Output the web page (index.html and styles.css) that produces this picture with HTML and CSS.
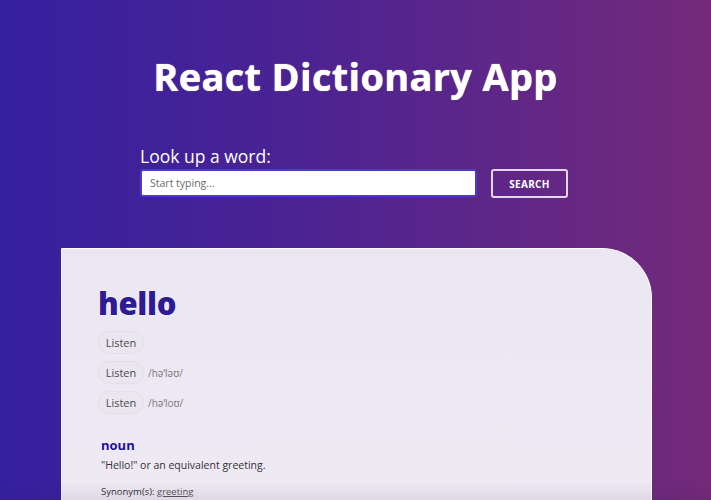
FILE: index.html
```html
<!DOCTYPE html>
<html lang="en">
<head>
<meta charset="utf-8">
<title>React Dictionary App</title>
<link rel="stylesheet" href="styles.css">
</head>
<body>
<div class="app">
  <h1 class="title">React Dictionary App</h1>
  <form class="search">
    <label class="search-label" for="q">Look up a word:</label>
    <div class="search-row">
      <input id="q" class="search-input" type="text" placeholder="Start typing...">
      <button class="search-btn" type="button">SEARCH</button>
    </div>
  </form>
  <section class="card">
    <h2 class="word">hello</h2>
    <div class="phonetics">
      <div class="phonetic"><button class="listen" type="button">Listen</button></div>
      <div class="phonetic"><button class="listen" type="button">Listen</button><span class="ipa">/həˈləʊ/</span></div>
      <div class="phonetic"><button class="listen" type="button">Listen</button><span class="ipa">/həˈloʊ/</span></div>
    </div>
    <div class="meaning">
      <h3 class="pos">noun</h3>
      <p class="definition">"Hello!" or an equivalent greeting.</p>
      <p class="synonyms">Synonym(s): <a class="syn" href="#">greeting</a></p>
    </div>
  </section>
</div>
<div class="bottom-fade"></div>
</body>
</html>
```
FILE: styles.css
```css
html, body {
  margin: 0;
  padding: 0;
}
body {
  min-height: 500px;
  background: linear-gradient(90deg, #3520a0 0%, #4a2393 40%, #622786 75%, #742a79 100%);
  font-family: "Open Sans", "Noto Sans", sans-serif;
  overflow: hidden;
}
.app {
  display: flex;
  flex-direction: column;
  align-items: center;
}
.title {
  margin: 50px 0 0;
  color: #fff;
  font-size: 38px;
  font-weight: 700;
  line-height: 52px;
  letter-spacing: 0.3px;
  text-shadow: 0 0 1px #fff, 1px 1px 0 rgba(60, 20, 120, 0.5);
}
.search {
  margin-top: 42px;
  width: 428px;
  margin-left: -3px;
  display: flex;
  flex-direction: column;
}
.search-label {
  color: #fff;
  font-size: 17.5px;
  line-height: 24px;
  margin-bottom: 1px;
}
.search-row {
  display: flex;
  gap: 14px;
}
.search-input {
  width: 337px;
  height: 28px;
  box-sizing: border-box;
  border: 2px solid #4a3cc6;
  border-radius: 3px;
  padding: 0 8px;
  font-family: inherit;
  font-size: 10.5px;
  color: #333;
  background: #fff;
  outline: none;
}
.search-input::placeholder {
  color: #6c6c6c;
}
.search-btn {
  width: 77px;
  height: 29px;
  box-sizing: border-box;
  border: 2px solid #e4d6ee;
  border-radius: 3px;
  background: transparent;
  color: #fff;
  font-family: inherit;
  font-size: 10px;
  font-weight: 700;
  letter-spacing: 0.3px;
  padding: 0;
}
.card {
  align-self: flex-start;
  margin: 50px 0 0 61px;
  width: 591px;
  min-height: 300px;
  box-sizing: border-box;
  background: linear-gradient(180deg, #ebe7f2 0%, #efeaf4 100%);
  border-top: 1px solid #fff;
  border-right: 1px solid #fff;
  border-left: 1px solid #f6f4fa;
  border-radius: 0 50px 0 0;
  padding: 34px 38px 34px 36px;
}
.word {
  margin: 0;
  color: #2e1b94;
  font-size: 31px;
  font-weight: 800;
  line-height: 40px;
  letter-spacing: -0.3px;
  text-shadow: 0 0 2px #fff;
}
.phonetics {
  margin-top: 8px;
  display: flex;
  flex-direction: column;
  gap: 7px;
}
.phonetic {
  display: flex;
  align-items: center;
  gap: 4px;
}
.listen {
  height: 23px;
  width: 46px;
  padding: 0;
  border: 1px solid #e3dee9;
  border-radius: 12px;
  background: #ebe7f0;
  color: #4a4a4a;
  font-family: inherit;
  font-size: 11px;
}
.ipa {
  color: #7a7a7a;
  font-size: 10px;
}
.meaning {
  margin-top: 22px;
  padding-left: 3px;
}
.pos {
  margin: 0;
  color: #1f109d;
  font-size: 13px;
  font-weight: 700;
  line-height: 18px;
}
.definition {
  margin: 3px 0 0;
  color: #333;
  font-size: 10.5px;
  line-height: 16px;
}
.synonyms {
  margin: 12px 0 0;
  color: #333;
  font-size: 9.5px;
  line-height: 14px;
}
.syn {
  color: #555;
  text-decoration: underline;
}
.bottom-fade {
  position: fixed;
  left: 0;
  right: 0;
  bottom: 0;
  height: 18px;
  background: linear-gradient(180deg, rgba(0, 0, 0, 0) 0%, rgba(40, 20, 60, 0.08) 100%);
  pointer-events: none;
}
```
